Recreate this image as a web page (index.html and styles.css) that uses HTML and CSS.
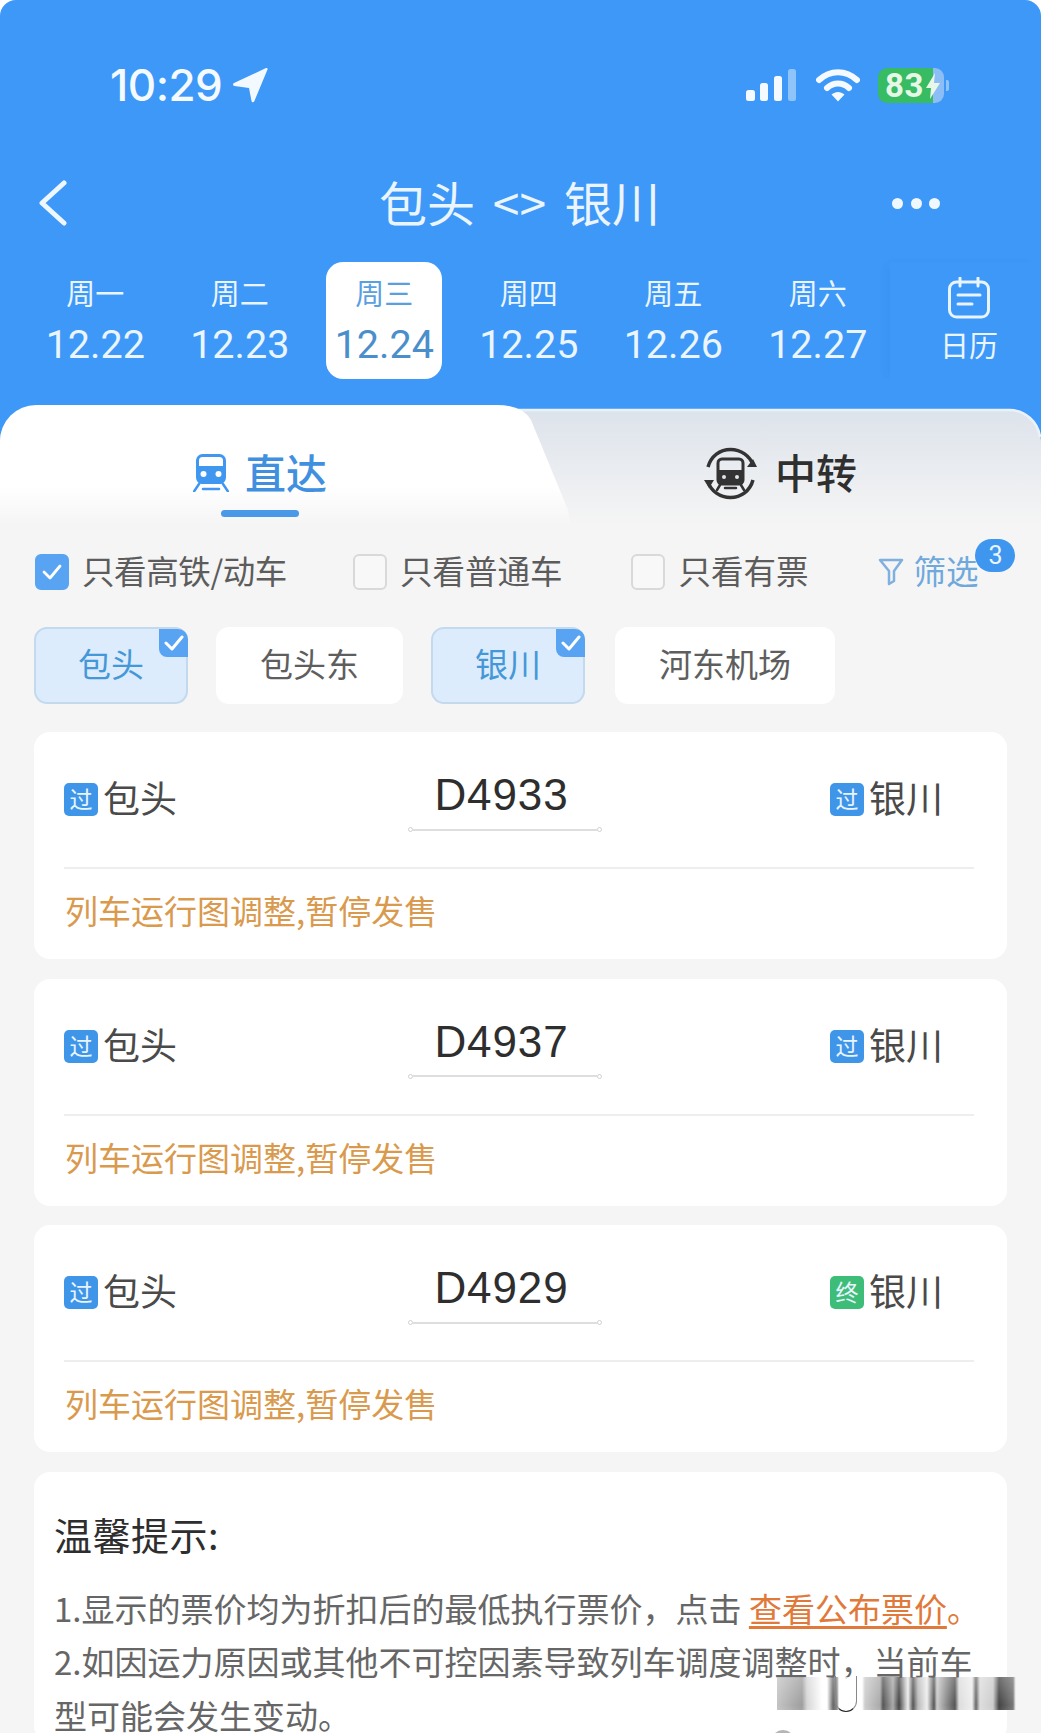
FILE: index.html
```html
<!DOCTYPE html>
<html lang="zh-CN">
<head>
<meta charset="utf-8">
<title>包头 &lt;&gt; 银川</title>
<link rel="stylesheet" href="styles.css">
</head>
<body>
<div class="page">
  <header class="head">
    <div class="status">
      <div class="clock">
        <span class="time">10:29</span>
        <svg class="loc" viewBox="0 0 36 36" width="36" height="36"><path d="M34 1 2 16c-1.500.7-1.200 2.600.5 2.900L17 21l2.500 13c.3 1.500 2.200 1.700 2.800.3L35.500 2.500c.4-1-.5-1.900-1.500-1.500z" fill="#f2f9ff"/></svg>
      </div>
      <div class="sys">
        <svg class="signal" viewBox="0 0 50 32" width="50" height="32"><rect x="0" y="21" width="9" height="11" rx="2.500" fill="#f4faff"/><rect x="14" y="14" width="8" height="18" rx="2.500" fill="#f4faff"/><rect x="28" y="7" width="8" height="25" rx="2.500" fill="#f4faff"/><rect x="42" y="0" width="8" height="32" rx="2.500" fill="#8fc4fa"/></svg>
        <svg class="wifi" viewBox="0 0 44 34" width="44" height="34"><path d="M3 12C14 1.500 30 1.500 41 12" fill="none" stroke="#f4faff" stroke-width="6" stroke-linecap="round"/><path d="M11 20c6.500-6 15.500-6 22 0" fill="none" stroke="#f4faff" stroke-width="6" stroke-linecap="round"/><path d="M15.500 26.500c4-3.500 9-3.500 13 0L22 33.500z" fill="#f4faff"/></svg>
        <div class="battery">
          <span class="bat-fill">83</span><span class="bat-rest"></span>
          <svg class="bolt" viewBox="0 0 14 26" width="14" height="26"><path d="M9 0 0 15h5l-1 11 10-16H8z" fill="#e8f7e8"/></svg>
        </div>
        <span class="bat-nub"></span>
      </div>
    </div>
    <nav class="nav">
      <svg class="back" viewBox="0 0 32 46" width="32" height="46"><path d="M28 3 6 23l22 20" fill="none" stroke="#eef7ff" stroke-width="5" stroke-linecap="round" stroke-linejoin="round"/></svg>
      <h1 class="title">包头 &lt;&gt; 银川</h1>
      <div class="dots"><i></i><i></i><i></i></div>
    </nav>
    <div class="dates">
      <div class="day"><span class="wk">周一</span><span class="dt">12.22</span></div>
      <div class="day"><span class="wk">周二</span><span class="dt">12.23</span></div>
      <div class="day on"><span class="wk">周三</span><span class="dt">12.24</span></div>
      <div class="day"><span class="wk">周四</span><span class="dt">12.25</span></div>
      <div class="day"><span class="wk">周五</span><span class="dt">12.26</span></div>
      <div class="day"><span class="wk">周六</span><span class="dt">12.27</span></div>
      <div class="cal">
        <svg viewBox="0 0 42 42" width="42" height="42"><rect x="1.500" y="5" width="39" height="35" rx="7" fill="none" stroke="#e8f4ff" stroke-width="3"/><path d="M12 1v8M30 1v8" stroke="#e8f4ff" stroke-width="3" stroke-linecap="round"/><path d="M10 18h22M10 27h14" stroke="#e8f4ff" stroke-width="3" stroke-linecap="round"/></svg>
        <span>日历</span>
      </div>
    </div>
  </header>

  <section class="tabs">
    <svg class="tabs-bg" viewBox="0 0 1041 120" width="1041" height="120" preserveAspectRatio="none">
      <defs>
        <linearGradient id="gr" x1="0" y1="0" x2="0" y2="1"><stop offset="0" stop-color="#dde3eb"/><stop offset="1" stop-color="#f5f5f5"/></linearGradient>
        <linearGradient id="gl" x1="0" y1="0" x2="0" y2="1"><stop offset="0" stop-color="#fff"/><stop offset=".68" stop-color="#fff"/><stop offset="1" stop-color="#f5f5f5"/></linearGradient>
      </defs>
      <path d="M0 120V36A31 31 0 0 1 31 5H1010A31 31 0 0 1 1041 36V120Z" fill="url(#gr)"/>
      <path d="M510 5H1010A31 31 0 0 1 1040 32" fill="none" stroke="#e9f2fa" stroke-width="2.500"/>
      <path d="M0 120V36A36 36 0 0 1 36 0H497Q522 0 531 15L568 105L570 120Z" fill="url(#gl)"/>
    </svg>
    <div class="tab tab-on">
      <div class="tab-row">
        <svg viewBox="0 0 36 38" width="36" height="38"><rect x="4.500" y="1.500" width="27" height="27" rx="5" fill="none" stroke="#3f97f0" stroke-width="3"/><path d="M4 12h28v13a5 5 0 0 1-5 5H9a5 5 0 0 1-5-5z" fill="#3f97f0"/><circle cx="10.500" cy="20" r="3" fill="#fff"/><circle cx="25.500" cy="20" r="3" fill="#fff"/><path d="M6 30 1 37.500M30 30l5 7.500M10 35h16" stroke="#3f97f0" stroke-width="2.500" stroke-linecap="round"/></svg>
        <span class="tab-txt">直达</span>
      </div>
      <div class="bar"></div>
    </div>
    <div class="tab">
      <div class="tab-row">
        <svg viewBox="0 0 53 53" width="53" height="53"><path d="M4 20C7 9 16 2.500 26.500 2.500S46 9 49 18" fill="none" stroke="#333" stroke-width="3.500"/><path d="M49 33C46 44 37 50.500 26.500 50.500S7 44 4 35" fill="none" stroke="#333" stroke-width="3.500"/><path d="M43 20h10l-4-8zM0 33h10l-5 8z" fill="#333"/><rect x="14" y="12" width="25" height="25" rx="4" fill="none" stroke="#333" stroke-width="3"/><path d="M14 23h25v11a4 4 0 0 1-4 4H18a4 4 0 0 1-4-4z" fill="#333"/><circle cx="20" cy="30" r="2" fill="#dfe5ec"/><circle cx="33" cy="30" r="2" fill="#dfe5ec"/><path d="M16 38l-3 5M37 38l3 5M21 41h11" stroke="#333" stroke-width="2.500" stroke-linecap="round"/></svg>
        <span class="tab-txt">中转</span>
      </div>
    </div>
  </section>

  <section class="filters">
    <label class="opt"><span class="box box-on"><svg viewBox="0 0 20 16" width="20" height="16"><path d="M2 8l6 6L18 2" fill="none" stroke="#fff" stroke-width="2.800" stroke-linecap="round" stroke-linejoin="round"/></svg></span><span class="lbl lbl-tight">只看高铁/动车</span></label>
    <label class="opt"><span class="box"></span><span class="lbl">只看普通车</span></label>
    <label class="opt opt-third"><span class="box"></span><span class="lbl">只看有票</span></label>
    <div class="screen">
      <svg viewBox="0 0 26 28" width="26" height="28"><path d="M2 2h22l-8 11v10l-5 3V13z" fill="none" stroke="#7fb0de" stroke-width="2.500" stroke-linejoin="round"/></svg>
      <span class="lbl">筛选</span>
      <b class="badge">3</b>
    </div>
  </section>

  <section class="chips">
    <div class="chip chip-on">包头<span class="tick"><svg viewBox="0 0 20 16" width="20" height="16"><path d="M2 8l6 6L18 2" fill="none" stroke="#fff" stroke-width="3" stroke-linecap="round" stroke-linejoin="round"/></svg></span></div>
    <div class="chip">包头东</div>
    <div class="chip chip-on">银川<span class="tick"><svg viewBox="0 0 20 16" width="20" height="16"><path d="M2 8l6 6L18 2" fill="none" stroke="#fff" stroke-width="3" stroke-linecap="round" stroke-linejoin="round"/></svg></span></div>
    <div class="chip">河东机场</div>
  </section>

  <main class="list">
    <article class="card">
      <div class="train">
        <div class="st"><span class="tag">过</span><span class="nm">包头</span></div>
        <div class="mid"><span class="no">D4933</span><span class="rail"><i></i><em></em><i></i></span></div>
        <div class="st st-end"><span class="tag">过</span><span class="nm">银川</span></div>
      </div>
      <p class="msg">列车运行图调整,暂停发售</p>
    </article>
    <article class="card">
      <div class="train">
        <div class="st"><span class="tag">过</span><span class="nm">包头</span></div>
        <div class="mid"><span class="no">D4937</span><span class="rail"><i></i><em></em><i></i></span></div>
        <div class="st st-end"><span class="tag">过</span><span class="nm">银川</span></div>
      </div>
      <p class="msg">列车运行图调整,暂停发售</p>
    </article>
    <article class="card">
      <div class="train">
        <div class="st"><span class="tag">过</span><span class="nm">包头</span></div>
        <div class="mid"><span class="no">D4929</span><span class="rail"><i></i><em></em><i></i></span></div>
        <div class="st st-end"><span class="tag tag-end">终</span><span class="nm">银川</span></div>
      </div>
      <p class="msg">列车运行图调整,暂停发售</p>
    </article>
    <article class="note">
      <h2>温馨提示:</h2>
      <p>1.显示的票价均为折扣后的最低执行票价，点击 <a class="link">查看公布票价</a><span class="dot-o">。</span></p>
      <p>2.如因运力原因或其他不可控因素导致列车调度调整时，当前车型可能会发生变动。</p>
    </article>
  </main>

  <div class="smear"></div>
  <div class="smear-u"></div>
  <div class="avatar"></div>
</div>
</body>
</html>
```

FILE: styles.css
```css
* { box-sizing: border-box; }
html, body { margin: 0; padding: 0; background: #fff; }
body { font-family: "Noto Sans CJK SC", "Noto Sans", sans-serif; }

.page { position: relative; width: 1041px; height: 1733px; overflow: hidden; background: #f5f5f5; border-radius: 16px 16px 0 0; }
.head { background: #3d98f7; height: 379px; padding-top: 65px; color: #eaf5ff; }

.status { display: flex; justify-content: space-between; align-items: center; height: 40px; padding: 0 92px 0 110px; }
.clock { display: flex; align-items: center; gap: 10px; }
.time { font-family: Inter, Roboto, sans-serif; font-size: 44px; font-weight: 500; line-height: 40px; letter-spacing: -.5px; color: #f4faff; }
.sys { display: flex; align-items: center; }
.signal { margin-right: 20px; }
.wifi { margin-right: 18px; }
.battery { position: relative; display: flex; width: 66px; height: 35px; }
.bat-fill { width: 55px; background: #37bb63; border-radius: 9px 0 0 9px; color: #e6f7e6; font-family: Roboto, sans-serif; font-weight: 700; font-size: 33px; line-height: 35px; padding-left: 7px; letter-spacing: .5px; }
.bat-rest { flex: 1; background: #8cbdf5; border-radius: 0 9px 9px 0; }
.bolt { position: absolute; left: 48px; top: 5px; }
.bat-nub { width: 3px; height: 11px; margin-left: 2px; background: #8fc4fa; border-radius: 0 2px 2px 0; }

.nav { display: grid; grid-template-columns: 1fr auto 1fr; align-items: center; height: 60px; padding: 0 38px 0 36px; margin-top: 68px; }
.back { display: block; }
.title { margin: -4px 0 0; font-size: 48px; line-height: 60px; font-weight: 400; word-spacing: 7px; white-space: nowrap; color: #eaf5ff; }
.dots { justify-self: end; display: flex; gap: 7.500px; margin-right: 63px; }
.dots i { width: 11px; height: 11px; border-radius: 50%; background: #f0f8ff; }

.dates { display: grid; grid-template-columns: repeat(6, 144.500px) 1fr; height: 117px; padding-left: 23px; margin-top: 29px; }
.day { display: flex; flex-direction: column; align-items: center; width: 116px; height: 117px; padding-top: 10px; justify-self: center; border-radius: 17px; }
.wk { font-size: 29px; line-height: 40px; }
.dt { font-family: Roboto, sans-serif; font-size: 39.500px; line-height: 50px; margin-top: 8px; }
.day.on { background: #fff; }
.day.on .wk { color: #5a9fe0; }
.day.on .dt { color: #4a8ecb; }
.cal { display: flex; flex-direction: column; align-items: center; padding-left: 7px; padding-top: 15px; box-shadow: -6px 0 10px -4px rgba(0, 70, 150, .07); }
.cal svg { display: block; }
.cal span { font-size: 29px; line-height: 36px; margin-top: 7px; }

.tabs { position: relative; display: grid; grid-template-columns: 520px 521px; height: 146px; padding-top: 26px; background: #3d98f7; }
.tabs-bg { position: absolute; left: 0; top: 26px; }
.tab { position: relative; display: flex; flex-direction: column; align-items: center; padding-top: 43px; }
.tab-row { display: flex; align-items: center; height: 50px; font-size: 41px; font-weight: 500; line-height: 50px; color: #2f2f2f; gap: 18px; }
.tab-on .tab-row { color: #4190df; gap: 16px; }
.tab-txt { margin-top: -4px; }
.bar { width: 78px; height: 7px; margin-top: 12px; border-radius: 4px; background: #4a98e8; }

.filters { display: flex; align-items: center; height: 40px; margin-top: 27px; padding-left: 35px; gap: 66px; font-size: 32.500px; color: #5c5c5c; }
.opt { display: flex; align-items: center; gap: 13px; line-height: 40px; white-space: nowrap; }
.opt-third { margin-left: 3px; }
.lbl { margin-top: -4px; }
.lbl-tight { letter-spacing: -.4px; }
.box { display: flex; align-items: center; justify-content: center; width: 34px; height: 36px; border-radius: 6px; border: 2px solid #d9d9d9; background: #f8f8f8; }
.box-on { background: #58a4f2; border-color: #58a4f2; }
.screen { position: relative; display: flex; align-items: center; gap: 9px; margin-left: 4px; color: #6fa9dc; line-height: 40px; white-space: nowrap; }
.badge { position: absolute; left: 97px; top: -15px; width: 40px; height: 33px; border-radius: 17px; background: #3f96ee; color: #e8f4ff; font-family: Roboto, sans-serif; font-weight: 400; font-size: 25px; line-height: 33px; text-align: center; }

.chips { display: flex; gap: 28px; margin-top: 35px; padding-left: 34px; }
.chip { position: relative; height: 77px; padding: 0 42px; border-radius: 13px; background: #fff; font-size: 33px; line-height: 69px; color: #5e5e5e; white-space: nowrap; border: 2px solid #fff; }
.chip:last-child { margin-left: 2px; }
.chip-on { background: #dcecfc; border-color: #c3d9ee; color: #4598d8; }
.tick { position: absolute; right: -2px; top: 0; display: flex; align-items: center; justify-content: center; width: 29px; height: 28px; background: #58a4f2; border-radius: 0 10px 0 8px; }

.list { display: flex; flex-direction: column; gap: 19.500px; margin: 28px 34px 0; }
.card { height: 227px; border-radius: 16px; background: #fff; padding: 0 33px 0 30px; }
.train { display: grid; grid-template-columns: 344px 194px 1fr; align-items: center; height: 135px; border-bottom: 2px solid #eee; box-sizing: content-box; }
.st { display: flex; align-items: center; gap: 5px; font-size: 37px; line-height: 44px; color: #4a4a4a; white-space: nowrap; }
.nm { margin-top: -5px; }
.st-end { justify-self: end; padding-right: 31px; }
.tag { display: block; width: 34px; height: 33px; border-radius: 5px; background: #3f96e8; color: #e8f4ff; font-size: 23px; line-height: 31px; text-align: center; }
.tag-end { background: #3dbd78; }
.mid { display: flex; flex-direction: column; align-items: center; align-self: start; padding-top: 38px; }
.no { font-family: "Liberation Sans", Arial, sans-serif; font-size: 44px; line-height: 50px; color: #2e2e2e; letter-spacing: .9px; margin-right: 7px; }
.rail { display: flex; align-items: center; width: 194px; margin-top: 7px; }
.rail em { flex: 1; height: 2px; background: #dedede; }
.rail i { width: 5px; height: 5px; border-radius: 50%; border: 1px solid #d0d0d0; background: #fff; }
.msg { margin: 0; padding: 18px 0 0 1px; font-size: 33px; line-height: 46px; color: #d99a4e; white-space: nowrap; }

.note { border-radius: 16px; background: #fff; padding: 37px 20px 0; font-size: 33px; line-height: 53.600px; color: #666; }
.note h2 { margin: 0 0 23px; font-size: 38px; line-height: 50px; font-weight: 400; letter-spacing: .5px; color: #2e2e2e; }
.note p { margin: 0; }
.link { color: #e0793a; text-decoration: underline; text-underline-offset: 4px; }
.dot-o { color: #e0793a; }

.smear { position: absolute; left: 777px; top: 1677px; width: 239px; height: 33px;
  background: linear-gradient(90deg, #c4c4c4 0, #9e9e9e 25px, #d6d6d6 30px, #fff 45px, #fff 50px, #666 56px, #888 60px, #fff 62px, #fff 85px, #ccc 88px, #aaa 103px, #555 106px, #aaa 116px, #444 122px, #bbb 128px, #eee 131px, #555 136px, #bbb 141px, #eee 150px, #555 157px, #ccc 160px, #888 170px, #555 178px, #ddd 182px, #eee 195px, #666 199px, #ddd 203px, #ccc 216px, #444 222px, #777 236px, #fff 239px);
  -webkit-mask-image: linear-gradient(180deg, rgba(0,0,0,.75), rgba(0,0,0,1) 85%, rgba(0,0,0,.95));
  mask-image: linear-gradient(180deg, rgba(0,0,0,.75), rgba(0,0,0,1) 85%, rgba(0,0,0,.95)); }
.smear-u { position: absolute; left: 835px; top: 1676px; width: 22px; height: 36px; border: 1.500px solid #888; border-top: 0; border-bottom-color: #222; border-radius: 0 0 12px 12px; }
.avatar { position: absolute; left: 771px; top: 1730px; width: 24px; height: 24px; border-radius: 50%; background: #b5b5b5; }
```
